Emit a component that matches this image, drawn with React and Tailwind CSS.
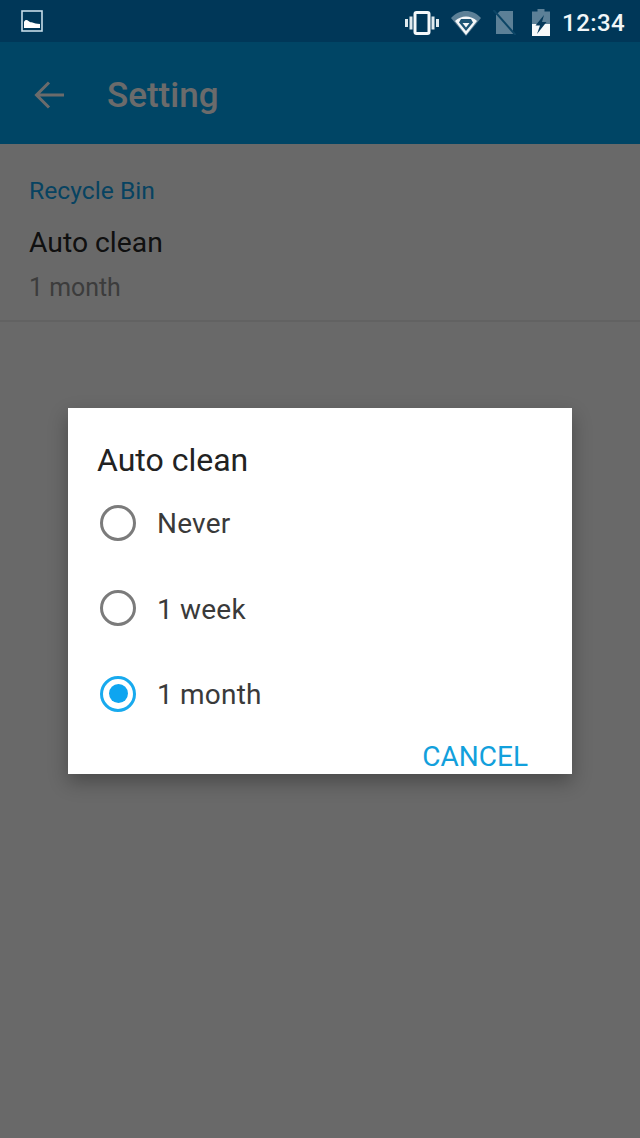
import React from "react";

function Radio({ checked }) {
  return (
    <span className={`flex h-9 w-9 shrink-0 items-center justify-center rounded-full border-[3.5px] ${checked ? "border-[#18aaee]" : "border-[#7b7b7b]"}`}>
      {checked && <span className="h-[19px] w-[19px] rounded-full bg-[#0ea5f0]" />}
    </span>
  );
}

function Option({ label, checked }) {
  return (
    <div className="flex h-[85.5px] items-center pl-8">
      <Radio checked={checked} />
      <span className="ml-[21px] mt-[3px] text-[28px] leading-none tracking-[0.2px] text-[#3a3a3a]">{label}</span>
    </div>
  );
}

function StatusIcons() {
  return (
    <div className="flex items-center pt-[3px]">
      <svg width="34" height="24" viewBox="0 0 34 24" fill="none">
        <rect x="10" y="1.5" width="14" height="21" rx="1.5" stroke="#f4f8fa" strokeWidth="3" />
        <rect x="4.5" y="5.5" width="3" height="13" fill="#dfe9ee" />
        <rect x="0" y="8" width="3" height="8" fill="#dfe9ee" />
        <rect x="26.5" y="5.5" width="3" height="13" fill="#dfe9ee" />
        <rect x="31" y="8" width="3" height="8" fill="#dfe9ee" />
      </svg>
      <svg className="ml-[11px]" width="32" height="26" viewBox="0 0 32 26">
        <path d="M1 8 C9 -1.5 23 -1.5 31 8 L16 26 Z" fill="#5c8097" />
        <path d="M5 11 C11 5 21 5 27 11 L16 25 Z" fill="#f4f7f9" />
        <path d="M11 9 H21 L23 12.5 L16 21 L9 12.5 Z M12.5 13 L16 17.5 L19.5 13 Z" fill="#1d5474" fillRule="evenodd" />
      </svg>
      <svg className="ml-[11px]" width="23" height="25" viewBox="0 0 23 25">
        <path d="M7 1 H20 V24 H3 V5 Z" fill="#5c8097" />
        <path d="M0.5 0 L22.5 25" stroke="#0c4566" strokeWidth="2" />
      </svg>
      <svg className="ml-[16px]" width="18" height="27" viewBox="0 0 18 27">
        <path d="M5.5 0 H12.5 V2.5 H18 V27 H0 V2.5 H5.5 Z" fill="#5c8097" />
        <rect x="0" y="15" width="18" height="12" fill="#f6f9fa" />
        <path d="M12 6 L3.5 16.5 H8 L5 25 L14.5 13 H10 Z" fill="#06395a" />
      </svg>
      <span className="ml-[12px] text-[24px] font-medium leading-none tracking-[0.4px] text-[#f1f6f8]">12:34</span>
    </div>
  );
}

export default function App() {
  return (
    <div className="relative flex h-[1138px] w-[640px] flex-col overflow-hidden bg-[#fbfbfb] font-['Roboto',sans-serif]">
      <header className="flex h-[42px] shrink-0 items-center justify-between bg-[#003758] pl-[21px] pr-[15px]">
        <svg width="22" height="22" viewBox="0 0 22 22" fill="none">
          <rect x="1" y="1" width="20" height="20" stroke="#c6dde9" strokeWidth="1.6" />
          <path d="M3 18 V12 C4 9.5 6 9.5 7.5 11 C9 12.5 10 12 11.5 12.5 C13.5 13 15 14 19 14 V18 Z" fill="#ffffff" />
        </svg>
        <StatusIcons />
      </header>

      <div className="flex h-[102px] shrink-0 items-center bg-[#00a4f0]">
        <svg className="ml-[34px] mt-[4px]" width="32" height="30" viewBox="0 0 32 30" fill="none">
          <path d="M30 15 H3 M15 2.5 L2.5 15 L15 27.5" stroke="#ffffff" strokeWidth="3" />
        </svg>
        <h1 className="ml-[41px] mt-[4px] text-[35px] font-medium leading-none text-white">Setting</h1>
      </div>

      <section className="flex h-[178px] shrink-0 flex-col border-b-2 border-[#e9e9e9] pl-[29px]">
        <div className="mt-[34px] text-[24.7px] leading-[26px] text-[#119fe6]">Recycle Bin</div>
        <div className="mt-[24px] text-[28.3px] leading-[30px] text-[#262626]">Auto clean</div>
        <div className="mt-[17px] text-[24.9px] leading-[26px] text-[#8f8f8f]">1 month</div>
      </section>

      <div className="absolute inset-x-0 bottom-0 top-[42px] bg-[#000000]/[.58]" />

      <div className="absolute left-[68px] top-[408px] h-[366px] w-[504px] bg-white shadow-[0_8px_18px_rgba(0,0,0,0.3)]">
        <h2 className="ml-[29px] mt-[35px] text-[32px] leading-[34px] text-[#222222]">Auto clean</h2>
        <div className="mt-[3px] flex flex-col">
          <Option label="Never" />
          <Option label="1 week" />
          <Option label="1 month" checked />
        </div>
        <div className="absolute bottom-[1px] right-[44px] text-[28px] leading-[32px] text-[#12a0dc]">CANCEL</div>
      </div>
    </div>
  );
}
